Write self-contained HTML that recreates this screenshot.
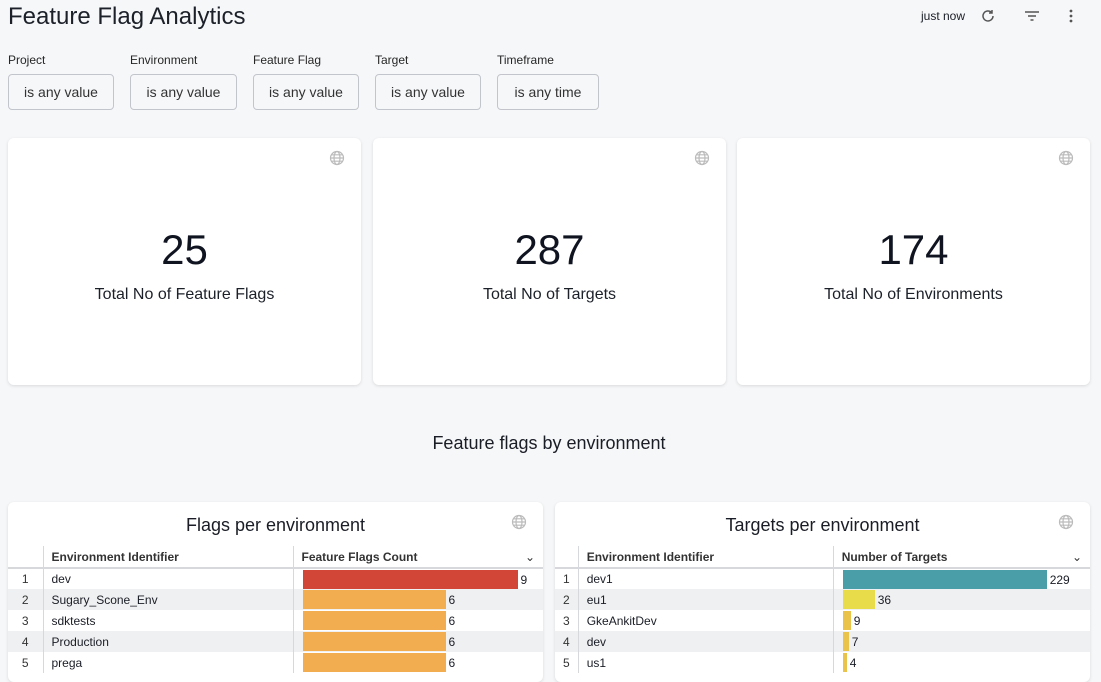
<!DOCTYPE html>
<html><head><style>
*{box-sizing:border-box;margin:0;padding:0}
body{width:1101px;height:668px;overflow:hidden;background:#f6f7f9;font-family:"Liberation Sans",Arial,sans-serif;color:#1a1d26;position:relative}
.abs{position:absolute}
.title{left:8px;top:3px;font-size:24px;color:#1c2029}
.flab{font-size:12px;top:53px;color:#262626}
.fbtn{top:74px;height:36px;border:1px solid #c2c5cc;border-radius:4px;background:#f6f7f9;font-size:14px;color:#333;display:flex;align-items:center;justify-content:center}
.card{background:#fff;border-radius:6px;box-shadow:0 1px 3px rgba(0,0,0,.12)}
.big{font-size:42px;width:100%;text-align:center;top:88px;color:#0f1420}
.sub{font-size:16px;width:100%;text-align:center;top:148px;color:#1c2029}
.globe{width:16px;height:16px}
table{border-collapse:collapse;font-size:12px;position:absolute;left:0;top:44px;width:100%}
td,th{height:21px;padding:0 8px;text-align:left;white-space:nowrap}
th{font-weight:bold;color:#333;border-bottom:2px solid #d6d8dc;height:22px}
th.e{border-left:1px solid #d6d8dc}
td.n{text-align:center;color:#333}
tr.g td{background:#eff0f1}
td.b{border-left:1px solid #d6d8dc;position:relative}
td.e{border-left:1px solid #d6d8dc}
.bar{position:absolute;left:9px;top:1px;height:19px}
.val{position:absolute;top:4px;font-size:12px}
</style></head><body>
<div class="abs title">Feature Flag Analytics</div>
<div class="abs" style="left:921px;top:9px;font-size:12px">just now</div>
<svg class="abs" style="left:980px;top:8px" width="16" height="16" viewBox="0 0 16 16" fill="none" stroke="#555" stroke-width="1.5"><path d="M13 8a5 5 0 1 1-1.5-3.6"/><path d="M12 2v3h-3"/></svg>
<svg class="abs" style="left:1024px;top:10px" width="16" height="12" viewBox="0 0 16 12" stroke="#555" stroke-width="1.4"><path d="M1 2h14M4 6h8M6.5 10h3"/></svg>
<svg class="abs" style="left:1068px;top:8px" width="6" height="16" viewBox="0 0 6 16" fill="#555"><circle cx="3" cy="3" r="1.4"/><circle cx="3" cy="8" r="1.4"/><circle cx="3" cy="13" r="1.4"/></svg>

<div class="abs flab" style="left:8px">Project</div>
<div class="abs flab" style="left:130px">Environment</div>
<div class="abs flab" style="left:253px">Feature Flag</div>
<div class="abs flab" style="left:375px">Target</div>
<div class="abs flab" style="left:497px">Timeframe</div>
<div class="abs fbtn" style="left:8px;width:106px">is any value</div>
<div class="abs fbtn" style="left:130px;width:107px">is any value</div>
<div class="abs fbtn" style="left:253px;width:106px">is any value</div>
<div class="abs fbtn" style="left:375px;width:106px">is any value</div>
<div class="abs fbtn" style="left:497px;width:102px">is any time</div>

<div class="abs card" style="left:8px;top:138px;width:353px;height:247px">
 <div class="abs big">25</div><div class="abs sub">Total No of Feature Flags</div>
 <svg class="abs globe" style="right:16px;top:12px" viewBox="0 0 16 16" fill="none" stroke="#bbb" stroke-width="1.2"><circle cx="8" cy="8" r="6.5"/><ellipse cx="8" cy="8" rx="3" ry="6.5"/><path d="M1.5 8h13M2.5 4.8h11M2.5 11.2h11"/></svg>
</div>
<div class="abs card" style="left:373px;top:138px;width:353px;height:247px">
 <div class="abs big">287</div><div class="abs sub">Total No of Targets</div>
 <svg class="abs globe" style="right:16px;top:12px" viewBox="0 0 16 16" fill="none" stroke="#bbb" stroke-width="1.2"><circle cx="8" cy="8" r="6.5"/><ellipse cx="8" cy="8" rx="3" ry="6.5"/><path d="M1.5 8h13M2.5 4.8h11M2.5 11.2h11"/></svg>
</div>
<div class="abs card" style="left:737px;top:138px;width:353px;height:247px">
 <div class="abs big">174</div><div class="abs sub">Total No of Environments</div>
 <svg class="abs globe" style="right:16px;top:12px" viewBox="0 0 16 16" fill="none" stroke="#bbb" stroke-width="1.2"><circle cx="8" cy="8" r="6.5"/><ellipse cx="8" cy="8" rx="3" ry="6.5"/><path d="M1.5 8h13M2.5 4.8h11M2.5 11.2h11"/></svg>
</div>

<div class="abs" style="left:0;width:1098px;text-align:center;top:433px;font-size:18px">Feature flags by environment</div>

<div class="abs card" style="left:8px;top:502px;width:535px;height:180px;overflow:hidden">
 <div class="abs" style="width:100%;text-align:center;top:13px;font-size:18px">Flags per environment</div>
 <svg class="abs globe" style="right:16px;top:12px" viewBox="0 0 16 16" fill="none" stroke="#bbb" stroke-width="1.2"><circle cx="8" cy="8" r="6.5"/><ellipse cx="8" cy="8" rx="3" ry="6.5"/><path d="M1.5 8h13M2.5 4.8h11M2.5 11.2h11"/></svg>
 <table><colgroup><col style="width:35px"><col style="width:250px"><col></colgroup>
 <tr><th></th><th class="e">Environment Identifier</th><th class="e">Feature Flags Count<span style="float:right;font-weight:normal">⌄</span></th></tr>
 <tr><td class="n">1</td><td class="e">dev</td><td class="b"><div class="bar" style="width:215px;background:#d24637"></div><span class="val" style="left:227px">9</span></td></tr>
 <tr class="g"><td class="n">2</td><td class="e">Sugary_Scone_Env</td><td class="b"><div class="bar" style="width:143px;background:#f1ad4f"></div><span class="val" style="left:155px">6</span></td></tr>
 <tr><td class="n">3</td><td class="e">sdktests</td><td class="b"><div class="bar" style="width:143px;background:#f1ad4f"></div><span class="val" style="left:155px">6</span></td></tr>
 <tr class="g"><td class="n">4</td><td class="e">Production</td><td class="b"><div class="bar" style="width:143px;background:#f1ad4f"></div><span class="val" style="left:155px">6</span></td></tr>
 <tr><td class="n">5</td><td class="e">prega</td><td class="b"><div class="bar" style="width:143px;background:#f1ad4f"></div><span class="val" style="left:155px">6</span></td></tr>
 </table>
</div>

<div class="abs card" style="left:555px;top:502px;width:535px;height:180px;overflow:hidden">
 <div class="abs" style="width:100%;text-align:center;top:13px;font-size:18px">Targets per environment</div>
 <svg class="abs globe" style="right:16px;top:12px" viewBox="0 0 16 16" fill="none" stroke="#bbb" stroke-width="1.2"><circle cx="8" cy="8" r="6.5"/><ellipse cx="8" cy="8" rx="3" ry="6.5"/><path d="M1.5 8h13M2.5 4.8h11M2.5 11.2h11"/></svg>
 <table><colgroup><col style="width:23px"><col style="width:255px"><col></colgroup>
 <tr><th></th><th class="e">Environment Identifier</th><th class="e">Number of Targets<span style="float:right;font-weight:normal">⌄</span></th></tr>
 <tr><td class="n">1</td><td class="e">dev1</td><td class="b"><div class="bar" style="width:204px;background:#4a9ea8"></div><span class="val" style="left:216px">229</span></td></tr>
 <tr class="g"><td class="n">2</td><td class="e">eu1</td><td class="b"><div class="bar" style="width:32px;background:#e8dc4a"></div><span class="val" style="left:44px">36</span></td></tr>
 <tr><td class="n">3</td><td class="e">GkeAnkitDev</td><td class="b"><div class="bar" style="width:8px;background:#eac34a"></div><span class="val" style="left:20px">9</span></td></tr>
 <tr class="g"><td class="n">4</td><td class="e">dev</td><td class="b"><div class="bar" style="width:6px;background:#eac34a"></div><span class="val" style="left:18px">7</span></td></tr>
 <tr><td class="n">5</td><td class="e">us1</td><td class="b"><div class="bar" style="width:4px;background:#eac34a"></div><span class="val" style="left:16px">4</span></td></tr>
 </table>
</div>
</body></html>
